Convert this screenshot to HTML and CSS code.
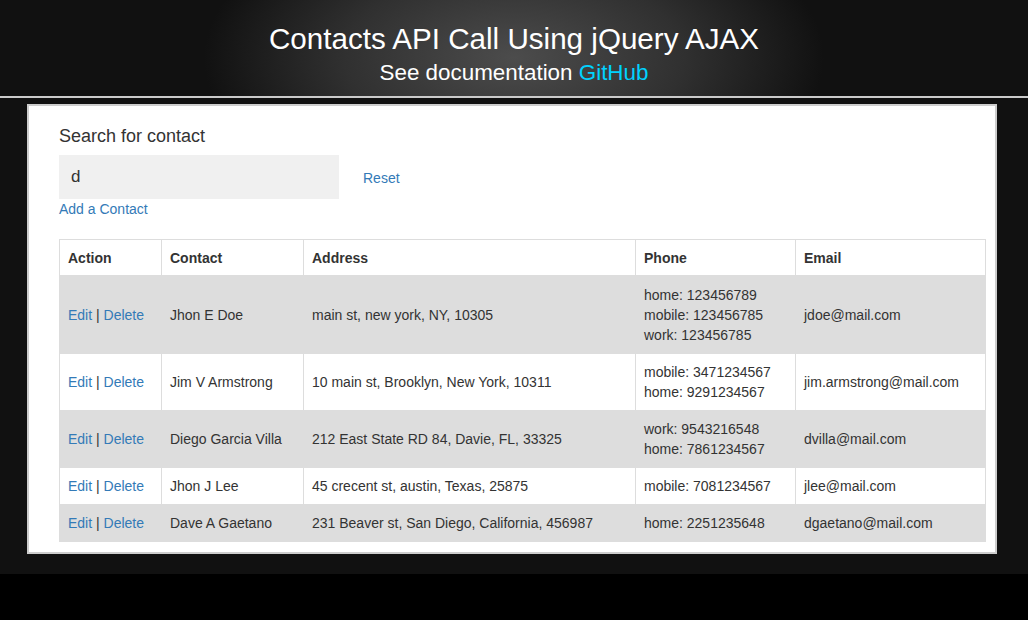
FILE: index.html
```html
<!DOCTYPE html>
<html>
<head>
<meta charset="utf-8">
<title>Contacts API Call Using jQuery AJAX</title>
<link rel="stylesheet" href="styles.css">
</head>
<body>
<div class="page">
  <header class="masthead">
    <h1 class="title">Contacts API Call Using jQuery AJAX</h1>
    <p class="subtitle">See documentation <a class="gh" href="#">GitHub</a></p>
  </header>
  <main class="card">
    <h4 class="search-label">Search for contact</h4>
    <div class="search-row">
      <input class="search-input" type="text" value="d">
      <a class="link reset" href="#">Reset</a>
    </div>
    <a class="link add" href="#">Add a Contact</a>
    <table class="contacts">
      <colgroup>
        <col class="c-action"><col class="c-contact"><col class="c-address"><col class="c-phone"><col class="c-email">
      </colgroup>
      <thead>
        <tr><th>Action</th><th>Contact</th><th>Address</th><th>Phone</th><th>Email</th></tr>
      </thead>
      <tbody>
        <tr>
          <td><a class="link" href="#">Edit</a> | <a class="link" href="#">Delete</a></td>
          <td>Jhon E Doe</td>
          <td>main st, new york, NY, 10305</td>
          <td>home: 123456789<br>mobile: 123456785<br>work: 123456785</td>
          <td>jdoe@mail.com</td>
        </tr>
        <tr>
          <td><a class="link" href="#">Edit</a> | <a class="link" href="#">Delete</a></td>
          <td>Jim V Armstrong</td>
          <td>10 main st, Brooklyn, New York, 10311</td>
          <td>mobile: 3471234567<br>home: 9291234567</td>
          <td>jim.armstrong@mail.com</td>
        </tr>
        <tr>
          <td><a class="link" href="#">Edit</a> | <a class="link" href="#">Delete</a></td>
          <td>Diego Garcia Villa</td>
          <td>212 East State RD 84, Davie, FL, 33325</td>
          <td>work: 9543216548<br>home: 7861234567</td>
          <td>dvilla@mail.com</td>
        </tr>
        <tr>
          <td><a class="link" href="#">Edit</a> | <a class="link" href="#">Delete</a></td>
          <td>Jhon J Lee</td>
          <td>45 crecent st, austin, Texas, 25875</td>
          <td>mobile: 7081234567</td>
          <td>jlee@mail.com</td>
        </tr>
        <tr>
          <td><a class="link" href="#">Edit</a> | <a class="link" href="#">Delete</a></td>
          <td>Dave A Gaetano</td>
          <td>231 Beaver st, San Diego, California, 456987</td>
          <td>home: 2251235648</td>
          <td>dgaetano@mail.com</td>
        </tr>
      </tbody>
    </table>
  </main>
</div>
</body>
</html>
```

FILE: styles.css
```css
html, body {
  margin: 0;
  padding: 0;
  background: #000;
}

body {
  font-family: "Liberation Sans", Arial, sans-serif;
  font-size: 14px;
  line-height: 20px;
  color: #333;
}

.page {
  background: #111;
  padding-bottom: 20px;
}

.masthead {
  height: 98px;
  box-sizing: border-box;
  padding-top: 22px;
  text-align: center;
  color: #fff;
  background: radial-gradient(ellipse 310px 160px at 50% 60%, #4c4c4c 0%, #303030 55%, #111 100%);
  border-bottom: 2px solid #cacaca;
}

.title {
  margin: 0;
  font-size: 29.6px;
  line-height: 34px;
  font-weight: normal;
}

.subtitle {
  margin: 4px 0 0;
  font-size: 22.4px;
  line-height: 26px;
}

.gh {
  color: #00d2ff;
  text-decoration: none;
}

.card {
  display: block;
  width: 970px;
  box-sizing: border-box;
  margin: 6px 0 0 27px;
  background: #fff;
  border: 2px solid #cdcdcd;
  padding: 20px 10px 10px 30px;
}

.search-label {
  margin: 0;
  font-size: 18px;
  line-height: 20px;
  font-weight: normal;
  color: #333;
}

.search-row {
  display: flex;
  align-items: center;
  gap: 24px;
  margin-top: 9px;
}

.search-input {
  width: 280px;
  height: 44px;
  box-sizing: border-box;
  border: none;
  outline: none;
  background: #f0f0f0;
  padding: 0 12px;
  font-family: "Liberation Sans", Arial, sans-serif;
  font-size: 17px;
  color: #333;
}

.link {
  color: #337ab7;
  text-decoration: none;
}

.reset {
  padding-top: 2px;
}

.add {
  display: block;
}

.contacts {
  margin-top: 20px;
  width: 926px;
  table-layout: fixed;
  border-collapse: collapse;
  border: 1px solid #ddd;
}

.c-action { width: 102px; }
.c-contact { width: 142px; }
.c-address { width: 332px; }
.c-phone { width: 160px; }
.c-email { width: 190px; }

.contacts th,
.contacts td {
  border: 1px solid #ddd;
  text-align: left;
  vertical-align: middle;
  padding: 8px;
}

.contacts th {
  padding: 8px 8px 7px;
  font-weight: bold;
  border-bottom-width: 2px;
  background: #fff;
}

.contacts tbody tr:nth-child(odd) {
  background: #ddd;
}
```
